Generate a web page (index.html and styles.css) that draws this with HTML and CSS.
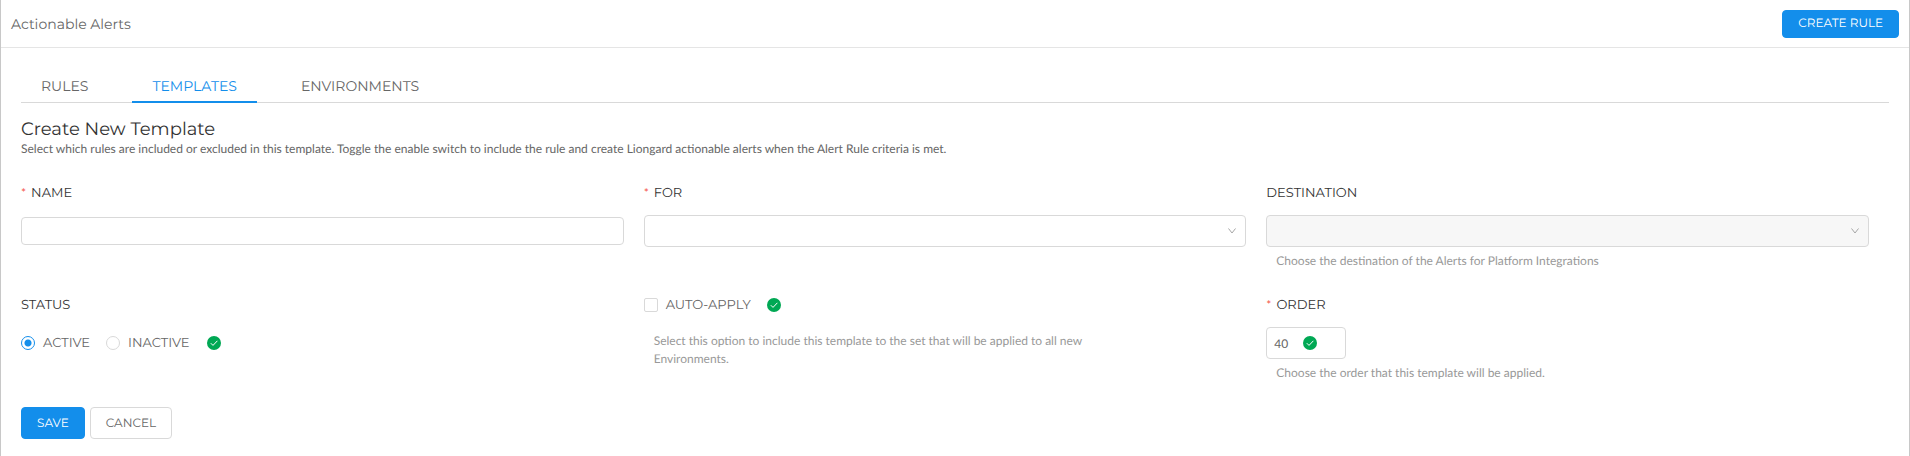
FILE: index.html
```
<!DOCTYPE html>
<html lang="en">

<head>
    <meta charset="UTF-8">
    <meta name="viewport" content="width=device-width, initial-scale=1.0">
    <link rel="stylesheet" href="styles.css">
    <title>Actionable Alerts</title>
</head>

<body>

    <div class="page">
        <header class="header">
            <h1>Actionable Alerts</h1>
            <button type="button" class="btn btnPrimary btnSmall">CREATE RULE</button>
        </header>

        <main class="content">
            <nav class="tabs">
                <a href="#rules">RULES</a>
                <a href="#templates" class="active">TEMPLATES</a>
                <a href="#environments">ENVIRONMENTS</a>
            </nav>

            <h2>Create New Template</h2>
            <p class="intro">Select which rules are included or excluded in this template. Toggle the enable switch to include the rule and create Liongard actionable alerts when the Alert Rule criteria is met.</p>

            <form>
                <div class="fields">
                    <div class="field">
                        <label class="label required" for="name">NAME</label>
                        <div class="control">
                            <input type="text" class="textInput" id="name">
                        </div>
                    </div>
                    <div class="field">
                        <label class="label required" for="for">FOR</label>
                        <div class="control select">
                            <select id="for">
                                <option></option>
                            </select>
                            <svg class="arrow" viewBox="0 0 10 10"><path d="M1.5 2.5 5 7 8.5 2.5" /></svg>
                        </div>
                    </div>
                    <div class="field">
                        <label class="label" for="destination">DESTINATION</label>
                        <div class="control select">
                            <select id="destination" disabled>
                                <option></option>
                            </select>
                            <svg class="arrow" viewBox="0 0 10 10"><path d="M1.5 2.5 5 7 8.5 2.5" /></svg>
                        </div>
                        <p class="help">Choose the destination of the Alerts for Platform Integrations</p>
                    </div>

                    <div class="field" role="radiogroup" aria-labelledby="status">
                        <span class="label" id="status">STATUS</span>
                        <div class="control">
                            <label class="option"><input type="radio" name="status" checked>ACTIVE</label>
                            <label class="option"><input type="radio" name="status">INACTIVE</label>
                            <svg class="valid" viewBox="0 0 14 14"><circle cx="7" cy="7" r="7" /><path d="M3.8 7.2 6 9.4 10.4 4.8" /></svg>
                        </div>
                    </div>
                    <div class="field">
                        <div class="autoApply">
                            <label class="option"><input type="checkbox">AUTO-APPLY</label>
                            <svg class="valid" viewBox="0 0 14 14"><circle cx="7" cy="7" r="7" /><path d="M3.8 7.2 6 9.4 10.4 4.8" /></svg>
                        </div>
                        <p class="help helpWrap">Select this option to include this template to the set that will be applied to all new Environments.</p>
                    </div>
                    <div class="field">
                        <label class="label required" for="order">ORDER</label>
                        <div class="control">
                            <div class="order">
                                <input type="text" id="order" value="40">
                                <svg class="valid" viewBox="0 0 14 14"><circle cx="7" cy="7" r="7" /><path d="M3.8 7.2 6 9.4 10.4 4.8" /></svg>
                            </div>
                        </div>
                        <p class="help">Choose the order that this template will be applied.</p>
                    </div>
                </div>

                <div class="actions">
                    <button type="submit" class="btn btnPrimary">SAVE</button>
                    <button type="button" class="btn">CANCEL</button>
                </div>
            </form>
        </main>
    </div>

</body>

</html>
```
FILE: styles.css
```
* {
    margin: 0;
    padding: 0;
    box-sizing: border-box;
}

body {
    font-family: Montserrat, Inter, sans-serif;
    font-size: 13px;
    font-weight: 400;
    color: #666;
    background-color: #fff;
    text-rendering: geometricPrecision;
}

input,
select,
button {
    font: inherit;
    color: inherit;
    text-rendering: inherit;
}

.page {
    min-height: 100vh;
    border-left: 1px solid #c8c8c8;
    border-right: 1px solid #c8c8c8;
}

.header {
    display: flex;
    align-items: center;
    justify-content: space-between;
    height: 48px;
    padding: 0 10px;
    border-bottom: 1px solid #e5e5e5;
}

.header h1 {
    font-size: 14px;
    font-weight: 400;
}

.content {
    padding: 20px;
}

/* tabs */
.tabs {
    display: flex;
    gap: 24px;
    border-bottom: 1px solid #d9d9d9;
}

.tabs a {
    padding: 9px 20px 6px;
    margin-bottom: -1px;
    border-bottom: 2px solid transparent;
    font-size: 14px;
    line-height: 18px;
    color: #666;
    text-decoration: none;
}

.tabs .active {
    color: #138eeb;
    border-color: #138eeb;
}

.content h2 {
    margin-top: 14px;
    font-size: 18px;
    font-weight: 400;
    line-height: 24px;
    color: #333;
}

.intro {
    font-family: Lato, sans-serif;
    font-size: 12px;
    line-height: 15px;
}

/* form */
.fields {
    display: grid;
    grid-template-columns: repeat(3, 1fr);
    row-gap: 25px;
    margin-top: 27px;
}

.field {
    padding-right: 20px;
}

.label {
    display: block;
    line-height: 20px;
    color: #333;
}

.required::before {
    content: "*";
    margin-right: 5px;
    font-family: Lato, sans-serif;
    font-size: 12px;
    line-height: 1;
    color: #f5554a;
}

.control {
    display: flex;
    align-items: center;
    height: 32px;
    margin-top: 12px;
}

.textInput,
.select select,
.order {
    border: 1px solid #d9d9d9;
    border-radius: 4px;
    background-color: #fff;
}

.textInput {
    width: 100%;
    height: 28px;
    padding: 0 8px;
}

.select {
    position: relative;
}

.select select {
    width: 100%;
    height: 32px;
    padding: 0 8px;
    appearance: none;
}

.select select:disabled {
    background-color: #f7f7f7;
    opacity: 1;
}

.select .arrow {
    position: absolute;
    right: 9px;
    width: 10px;
    height: 10px;
    fill: none;
    stroke: #a6a6a6;
    pointer-events: none;
}

.help {
    margin-top: 5px;
    padding-left: 10px;
    font-family: Lato, sans-serif;
    font-size: 12px;
    line-height: 18px;
    color: #999;
}

.helpWrap {
    max-width: 450px;
    margin-top: 17px;
}

.option {
    display: flex;
    align-items: center;
    gap: 8px;
    margin-right: 16px;
}

.option input {
    width: 14px;
    height: 14px;
    border: 1px solid #d9d9d9;
    border-radius: 2px;
    background-color: #fff;
    appearance: none;
}

.option input[type="radio"] {
    border-radius: 50%;
}

.option input:checked {
    border-color: #138eeb;
    background: radial-gradient(circle, #138eeb 3px, transparent 4px);
}

.valid {
    flex: none;
    width: 14px;
    height: 14px;
    fill: #00a854;
}

.control > .valid {
    margin-left: 2px;
}

.valid path {
    fill: none;
    stroke: #fff;
}

.autoApply {
    display: flex;
    align-items: center;
    height: 20px;
}

.order {
    display: flex;
    align-items: center;
    width: 80px;
    height: 32px;
    padding: 0 7px;
}

.order input {
    width: 29px;
    border: none;
    outline: none;
    font-family: Lato, sans-serif;
    font-size: 12px;
}

.actions {
    display: flex;
    gap: 5px;
    margin-top: 25px;
}

.btn {
    height: 32px;
    padding: 0 15px;
    border: 1px solid #d9d9d9;
    border-radius: 4px;
    background-color: #fff;
    font-size: 12px;
    cursor: pointer;
}

.btnSmall {
    height: 28px;
}

.btnPrimary {
    color: #fff;
    border-color: #138eeb;
    background-color: #138eeb;
}
```
